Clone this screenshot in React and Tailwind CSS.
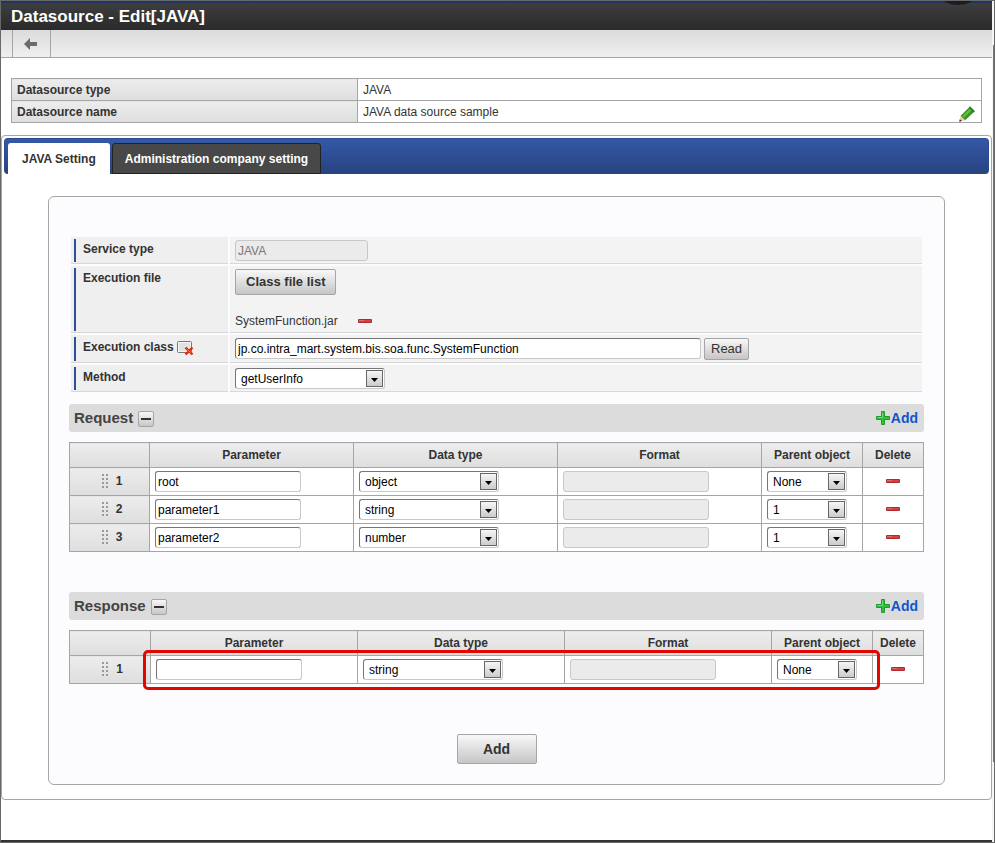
import { useState } from "react";

const requestRows = [
  { id: 1, parameter: "root", type: "object", parent: "None" },
  { id: 2, parameter: "parameter1", type: "string", parent: "1" },
  { id: 3, parameter: "parameter2", type: "number", parent: "1" },
];

const responseRows = [{ id: 1, parameter: "", type: "string", parent: "None" }];

const dataTypes = ["string", "number", "boolean", "date", "object"];

const inputClass =
  "block h-[21px] rounded-[3px] border border-[#c8c8c8] border-t-[#777] border-l-[#777] bg-white px-[2px] text-xs text-black";
const disabledClass =
  "block h-[21px] rounded-[3px] border border-[#c8c8c8] bg-[#ebebeb] px-[2px] text-xs text-[#777]";
const buttonClass =
  "rounded-[2px] border border-[#a5a5a5] bg-linear-to-b from-[#f8f8f8] to-[#c6c6c6] text-[#333]";

function BackIcon() {
  return (
    <svg width="14" height="12" viewBox="0 0 14 12">
      <path d="M0 6 6 0v4h7v4H6v4z" fill="#6b6b6b" />
    </svg>
  );
}

function PencilIcon() {
  return (
    <svg width="16" height="16" viewBox="0 0 16 16">
      <path d="M1.6 9.8 6.2 14.2.4 15.6z" fill="#e8cfa6" />
      <path d="M.8 13.2 2.8 15 .3 15.7z" fill="#222" />
      <path d="M1.6 9.8 11 .5 15.8 5.2 6.2 14.2z" fill="#3a9429" />
      <path d="M3.4 9.9 11.2 2.2l1.7 1.7-7.8 7.7z" fill="#68bb42" />
      <path d="M11 .5 15.8 5.2 14.4 6.5 9.7 1.8z" fill="#2a7d23" />
    </svg>
  );
}

function PlusIcon() {
  return (
    <svg width="14" height="14" viewBox="0 0 14 14">
      <path
        d="M5.5.5h3v5h5v3h-5v5h-3v-5h-5v-3h5z"
        fill="#2fc03a"
        stroke="#1f9a2c"
      />
      <path d="M6.5 1.5v5h-5" fill="none" stroke="#6fdc6f" />
    </svg>
  );
}

function MinusIcon() {
  return (
    <svg width="14" height="4" viewBox="0 0 14 4" className="block">
      <rect width="14" height="4" rx="1" fill="#b02a30" />
      <rect x="1" y="1" width="12" height="2" fill="#d24146" />
      <rect x="1" y="1" width="5" height="1" fill="#e46a6a" />
    </svg>
  );
}

function ClearIcon() {
  return (
    <svg width="17" height="15" viewBox="0 0 17 15">
      <rect x=".5" y=".5" width="14" height="11" rx="1" fill="#f4f4f4" stroke="#777" />
      <rect x="2" y="2" width="11" height="8" fill="#e2e2e2" />
      <path d="m8.5 6.5 7 7M15.5 6.5l-7 7" stroke="#e2260f" strokeWidth="2.4" />
      <path d="m10.5 8.5 3 3" stroke="#ff8a3c" strokeWidth="1" />
    </svg>
  );
}

function DragHandle() {
  return (
    <svg width="6" height="14" viewBox="0 0 6 14" fill="#999">
      {[0, 4, 8, 12].map((y) => (
        <g key={y}>
          <rect x="0" y={y} width="2" height="2" />
          <rect x="4" y={y} width="2" height="2" />
        </g>
      ))}
    </svg>
  );
}

function Select({ id, label, value, options, className }) {
  return (
    <div className={`relative ${className}`}>
      <select
        id={id}
        aria-label={label}
        defaultValue={value}
        className="block h-[21px] w-full appearance-none rounded-[3px] border border-[#c8c8c8] border-t-[#777] border-l-[#777] bg-white pl-[5px] text-xs text-black"
      >
        {options.map((option) => (
          <option key={option}>{option}</option>
        ))}
      </select>
      <span className="pointer-events-none absolute top-[2px] right-[2px] flex size-[17px] items-center justify-center border border-[#666] bg-linear-to-b from-[#f6f6f6] to-[#cccccc] pt-[2px]">
        <svg width="7" height="4" viewBox="0 0 7 4">
          <path d="M0 0h7L3.5 4z" fill="#000" />
        </svg>
      </span>
    </div>
  );
}

function FormRow({ label, htmlFor, icon, children }) {
  return (
    <div className="grid grid-cols-[157px_1fr] gap-x-[2px]">
      <div className="flex border-b border-[#d8d8d8] bg-[#efefef] px-[3px] pt-[2px] pb-px">
        <div className="flex flex-1 items-start gap-[3px] border-l-2 border-[#2f4f96] pl-[7px]">
          <label htmlFor={htmlFor} className="leading-5 font-bold">
            {label}
          </label>
          {icon && (
            <button type="button" aria-label="Clear" className="mt-1">
              {icon}
            </button>
          )}
        </div>
      </div>
      <div className="border-b border-[#d8d8d8] bg-[#f3f3f3] px-[5px] pt-[3px] pb-[2px]">
        {children}
      </div>
    </div>
  );
}

function SectionBar({ title, open, onToggle }) {
  return (
    <div className="flex h-7 items-center rounded-[3px] bg-[#dcdcdc] pr-[6px] pl-[5px]">
      <h2 className="text-[15px] font-bold text-[#444]">{title}</h2>
      <button
        type="button"
        aria-label={`Toggle ${title}`}
        onClick={onToggle}
        className={`${buttonClass} mt-[2px] ml-[5px] flex size-4 items-center justify-center`}
      >
        <span className="h-[2px] w-[10px] bg-[#333]" />
        {!open && <span className="-ml-[6px] h-[10px] w-[2px] bg-[#333]" />}
      </button>
      <a href="#add" className="ml-auto flex items-center gap-px text-sm font-bold text-[#1155cc]">
        <PlusIcon />
        Add
      </a>
    </div>
  );
}

function ParameterTable({ name, rows, handleCol, deleteCol }) {
  const headClass = "h-[25px] border border-[#a5a5a5] bg-linear-to-b from-[#ededed] to-[#dedede] p-0";
  const cellClass = "border border-[#a5a5a5] bg-white px-[5px] py-[3px]";
  return (
    <table className="w-full table-fixed border-collapse">
      <colgroup>
        <col className={handleCol} />
        <col />
        <col />
        <col />
        <col className="w-[101px]" />
        <col className={deleteCol} />
      </colgroup>
      <thead>
        <tr>
          <th className={headClass} />
          <th className={headClass}>Parameter</th>
          <th className={headClass}>Data type</th>
          <th className={headClass}>Format</th>
          <th className={headClass}>Parent object</th>
          <th className={headClass}>Delete</th>
        </tr>
      </thead>
      <tbody>
        {rows.map((row) => (
          <tr key={row.id}>
            <th className="border border-[#a5a5a5] bg-linear-to-b from-[#ededed] to-[#dedede] p-0">
              <div className="flex items-center justify-center gap-2 pb-[2px] pl-[5px]">
                <DragHandle />
                {row.id}
              </div>
            </th>
            <td className={cellClass}>
              <input
                type="text"
                aria-label={`${name} parameter ${row.id}`}
                defaultValue={row.parameter}
                className={`${inputClass} w-[146px]`}
              />
            </td>
            <td className={cellClass}>
              <Select
                label={`${name} data type ${row.id}`}
                value={row.type}
                options={dataTypes}
                className="w-[140px]"
              />
            </td>
            <td className={cellClass}>
              <input
                type="text"
                disabled
                aria-label={`${name} format ${row.id}`}
                className={`${disabledClass} w-[146px]`}
              />
            </td>
            <td className={cellClass}>
              <Select
                label={`${name} parent object ${row.id}`}
                value={row.parent}
                options={["None", "1", "2"]}
                className="w-[80px]"
              />
            </td>
            <td className={cellClass}>
              <button type="button" aria-label={`Delete row ${row.id}`} className="mx-auto block pb-[2px]">
                <MinusIcon />
              </button>
            </td>
          </tr>
        ))}
      </tbody>
    </table>
  );
}

export default function App() {
  const [requestOpen, setRequestOpen] = useState(true);
  const [responseOpen, setResponseOpen] = useState(true);

  return (
    <div className="flex min-h-screen border border-[#686868] bg-white font-['Liberation_Sans',Arial,sans-serif] text-xs text-[#333]">
      <div className="flex min-w-0 flex-1 flex-col">
        <header className="relative flex h-[29px] items-center border-t-2 border-[#1f3560] bg-linear-to-b from-[#3e3e3e] to-[#2a2a2a] pl-[10px]">
          <h1 className="text-[17px] leading-6 font-bold text-white">Datasource - Edit[JAVA]</h1>
          <svg width="28" height="4" viewBox="0 0 28 4" className="absolute -top-[2px] right-[20px]">
            <ellipse cx="14" cy="-4" rx="16" ry="8" fill="#1b1d20" />
          </svg>
        </header>
        <nav className="flex h-7 border-b border-[#a5a5a5] bg-linear-to-b from-[#dcdcdc] to-[#efefef] pl-[11px]">
          <button
            type="button"
            aria-label="Back"
            className="flex w-[39px] items-center justify-center border-x border-[#a5a5a5] pr-[2px]"
          >
            <BackIcon />
          </button>
        </nav>

        <div className="mx-[10px] mt-5">
          <table className="w-full table-fixed border-collapse">
            <colgroup>
              <col className="w-[346px]" />
              <col />
            </colgroup>
            <tbody>
              <tr>
                <th className="h-[22px] border border-[#a5a5a5] bg-linear-to-b from-[#ededed] to-[#dedede] px-[5px] py-0 text-left">
                  Datasource type
                </th>
                <td className="border border-[#a5a5a5] px-[5px] py-0">JAVA</td>
              </tr>
              <tr>
                <th className="h-[22px] border border-[#a5a5a5] bg-linear-to-b from-[#ededed] to-[#dedede] px-[5px] py-0 text-left">
                  Datasource name
                </th>
                <td className="border border-[#a5a5a5] px-[5px] py-0">
                  <div className="flex items-center justify-between">
                    JAVA data source sample
                    <button type="button" aria-label="Edit datasource name" className="mt-1 mr-px">
                      <PencilIcon />
                    </button>
                  </div>
                </td>
              </tr>
            </tbody>
          </table>
        </div>

        <main className="mt-3 rounded-[4px] border border-[#a5a5a5] p-[2px] pb-[14px]">
          <div
            role="tablist"
            className="flex h-9 items-end gap-[2px] rounded-[4px] border border-b-0 border-[#2c4a8f] bg-linear-to-b from-[#3559a8] to-[#27427f] pl-[3px]"
          >
            <button
              type="button"
              role="tab"
              aria-selected="true"
              className="h-[31px] rounded-t-[3px] bg-white px-[14px] font-bold"
            >
              JAVA Setting
            </button>
            <button
              type="button"
              role="tab"
              aria-selected="false"
              className="h-[31px] rounded-t-[3px] border border-[#222] bg-[#484848] px-3 font-bold text-white"
            >
              Administration company setting
            </button>
          </div>

          <div className="mx-11 mt-[22px] rounded-[6px] border border-[#a5a5a5] bg-[#fcfcfe] px-5 pt-10 pb-5">
            <div className="mx-[2px] flex flex-col gap-[2px]">
              <FormRow label="Service type" htmlFor="service-type">
                <input
                  id="service-type"
                  type="text"
                  disabled
                  defaultValue="JAVA"
                  className={`${disabledClass} w-[133px]`}
                />
              </FormRow>
              <FormRow label="Execution file" htmlFor="class-file-list">
                <button
                  id="class-file-list"
                  type="button"
                  className={`${buttonClass} block h-[26px] px-[10px] text-[13px] font-bold`}
                >
                  Class file list
                </button>
                <div className="mt-[17px] flex h-[18px] items-center gap-5">
                  SystemFunction.jar
                  <button type="button" aria-label="Remove SystemFunction.jar">
                    <MinusIcon />
                  </button>
                </div>
              </FormRow>
              <FormRow label="Execution class" htmlFor="execution-class" icon={<ClearIcon />}>
                <div className="flex gap-[3px]">
                  <input
                    id="execution-class"
                    type="text"
                    defaultValue="jp.co.intra_mart.system.bis.soa.func.SystemFunction"
                    className={`${inputClass} w-[466px]`}
                  />
                  <button type="button" className={`${buttonClass} h-[22px] px-[6px] text-[13px]`}>
                    Read
                  </button>
                </div>
              </FormRow>
              <FormRow label="Method" htmlFor="method">
                <Select
                  id="method"
                  value="getUserInfo"
                  options={["getUserInfo"]}
                  className="w-[150px]"
                />
              </FormRow>
            </div>

            <section className="mt-3">
              <SectionBar
                title="Request"
                open={requestOpen}
                onToggle={() => setRequestOpen(!requestOpen)}
              />
              {requestOpen && (
                <div className="mt-[10px]">
                  <ParameterTable
                    name="Request"
                    rows={requestRows}
                    handleCol="w-[80px]"
                    deleteCol="w-[61px]"
                  />
                </div>
              )}
            </section>

            <section className="mt-10">
              <SectionBar
                title="Response"
                open={responseOpen}
                onToggle={() => setResponseOpen(!responseOpen)}
              />
              {responseOpen && (
                <div className="relative mt-[10px]">
                  <ParameterTable
                    name="Response"
                    rows={responseRows}
                    handleCol="w-[81px]"
                    deleteCol="w-[51px]"
                  />
                  <div className="pointer-events-none absolute top-5 right-11 -bottom-[6px] left-[74px] rounded-[5px] border-3 border-[#e00800]" />
                </div>
              )}
            </section>

            <div className="mt-[50px] flex justify-center">
              <button type="button" className={`${buttonClass} h-[30px] w-20 text-sm font-bold`}>
                Add
              </button>
            </div>
          </div>
        </main>

        <footer className="mt-auto h-[2px] bg-[#333]" />
      </div>
      <div className="flex w-[2px] flex-col bg-[#f4f4f4] pt-11 pb-20">
        <div className="flex-1 border-r border-[#777]" />
      </div>
    </div>
  );
}
